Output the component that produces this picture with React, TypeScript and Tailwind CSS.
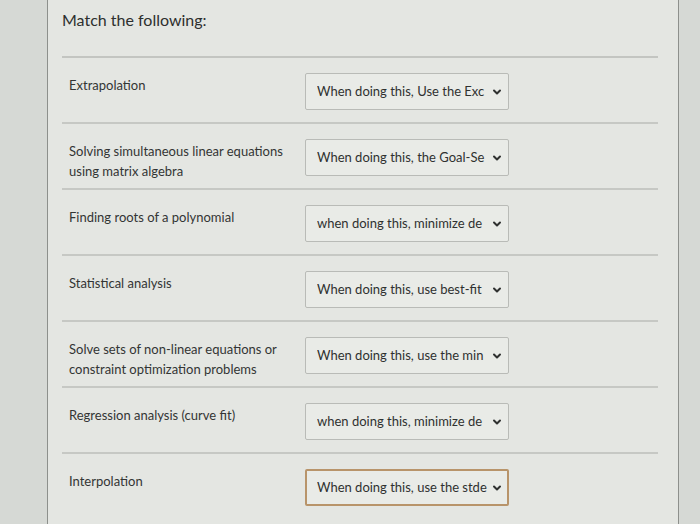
import { ChevronDown } from 'lucide-react'

interface Row {
  label: string[]
  answer: string
  focused?: boolean
}

const rows: Row[] = [
  { label: ['Extrapolation'], answer: 'When doing this, Use the Exc' },
  { label: ['Solving simultaneous linear equations', 'using matrix algebra'], answer: 'When doing this, the Goal-Se' },
  { label: ['Finding roots of a polynomial'], answer: 'when doing this, minimize de' },
  { label: ['Statistical analysis'], answer: 'When doing this, use best-fit' },
  { label: ['Solve sets of non-linear equations or', 'constraint optimization problems'], answer: 'When doing this, use the min' },
  { label: ['Regression analysis (curve fit)'], answer: 'when doing this, minimize de' },
  { label: ['Interpolation'], answer: 'When doing this, use the stde', focused: true },
]

// Canvas-style "Match the following" quiz question
export default function App() {
  return (
    <div className="w-[700px] h-[524px] overflow-hidden bg-[#d6d9d5] flex"
      style={{ fontFamily: 'Lato, "Open Sans", sans-serif' }}>
      <div className="ml-[47px] w-[632px] h-full bg-[#e4e6e2] border-l border-r border-[#8d908c] pl-[14px] pr-[20px]">
        <h2 className="pt-[8px] h-[56px] text-[16px] text-[#2d2f2e]">Match the following:</h2>
        <div className="border-t-2 border-[#c3c5c1]">
          {rows.map((r, i) => (
            <div key={i} className="h-[66px] flex items-start pt-[15px] border-b-2 border-[#c6c8c4] last:border-b-0">
              <div className="w-[243px] pl-[7px] pt-[2px] text-[13px] leading-[20px] text-[#333534]">
                {r.label.map((l, j) => <div key={j}>{l}</div>)}
              </div>
              <div className={`w-[204px] h-[37px] flex items-center rounded-[2px] bg-[#e9ebe7] ${r.focused ? 'border-2 border-[#b8946a] pl-[10px] pr-[4px]' : 'border border-[#b9bbb7] pl-[11px] pr-[5px]'}`}>
                <div className="flex-1 overflow-hidden whitespace-nowrap text-[13px] text-[#2f3130]">
                  {r.answer}
                </div>
                <ChevronDown size={12} strokeWidth={4} className="ml-[3px] text-[#2f3130]" />
              </div>
            </div>
          ))}
        </div>
      </div>
    </div>
  )
}
